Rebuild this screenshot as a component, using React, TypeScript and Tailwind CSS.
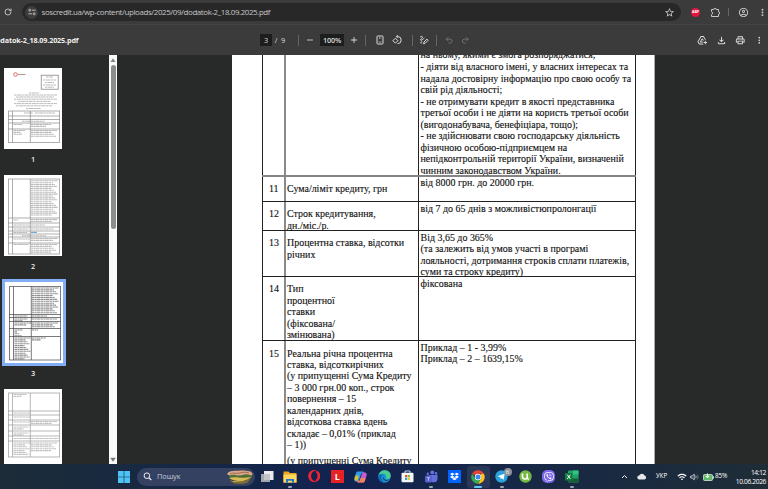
import type { ReactNode } from "react";
import { Redo2, RotateCw, Undo2 } from "lucide-react";
import {
  MdAdd,
  MdAddToDrive,
  MdMoreVert,
  MdOutlineAccountCircle,
  MdOutlineFileDownload,
  MdOutlinePrint,
  MdRemove,
  MdStarBorder,
  MdWifi,
} from "react-icons/md";
import { FaDropbox, FaOpera, FaViber } from "react-icons/fa";

interface SlotProps {
  className?: string;
  children?: ReactNode;
}

const Slot = ({ className = "", children }: SlotProps) => (
  <div className={`flex h-3 shrink-0 items-center justify-center ${className}`}>
    {children}
  </div>
);

const Divider = ({ className = "h-[11px]" }: SlotProps) => (
  <div className={`w-px shrink-0 bg-[#656565] ${className}`} />
);

const AddressBar = () => (
  <div className="flex h-[25px] items-center border-b border-[#434343] text-[#c7c7c7]">
    <Slot className="ml-[3px] w-2.5">
      <RotateCw size={8} strokeWidth={2.8} />
    </Slot>
    <div className="ml-[9px] flex h-[18px] w-[661px] items-center rounded-full bg-[#282828]">
      <div className="ml-[3px] flex size-[13px] items-center justify-center rounded-full bg-[#3d3d3d]">
        <svg width="8" height="8" viewBox="0 0 8 8" fill="none" stroke="currentColor" strokeWidth="0.9">
          <circle cx="1.8" cy="2.2" r="1" />
          <path d="M4 2.2h3.6M0.4 5.8h3.6" />
          <circle cx="6.2" cy="5.8" r="1" />
        </svg>
      </div>
      <span className="ml-[3.5px] text-[7.9px] leading-[12px] tracking-[-0.38px] whitespace-nowrap">
        soscredit.ua/wp-content/uploads/2025/09/dodatok-2_18.09.2025.pdf
      </span>
      <MdStarBorder size={11} className="mr-[6px] ml-auto" />
    </div>
    <Slot className="ml-[10px] w-[9px]">
      <div className="flex size-[9px] items-center justify-center rounded-full bg-[#e4153e] text-[3.5px] font-bold text-white">
        ABP
      </div>
    </Slot>
    <Slot className="ml-[9px] w-3">
      <svg width="11" height="11" viewBox="0 0 11 11" fill="none" stroke="currentColor">
        <path d="M1.500 2.500h2.300a1.200 1.200 0 0 1 2.400 0h2.300v2.300a1.200 1.200 0 0 1 0 2.400v2.300h-7V7.600a1.500 1.500 0 0 0 0-2.900z" />
      </svg>
    </Slot>
    <Divider className="ml-[7px] h-2" />
    <Slot className="ml-[8px] w-3">
      <MdOutlineAccountCircle size={11} />
    </Slot>
    <Slot className="ml-[7px] w-3">
      <MdMoreVert size={11} />
    </Slot>
  </div>
);

const PdfToolbar = () => (
  <div className="flex h-[30px] items-center text-[#dcdcdc]">
    <div className="flex w-[260px] overflow-hidden">
      <span className="-ml-[4px] text-[7.2px] leading-[12px] font-bold tracking-[-0.14px] whitespace-nowrap text-[#efefef]">
        odatok-2_18.09.2025.pdf
      </span>
    </div>
    <Slot className="w-3 bg-[#1d1d1d] text-[7.3px] font-medium">3</Slot>
    <Slot className="ml-[2px] w-1 text-[7.3px]">/</Slot>
    <Slot className="ml-[2px] w-1.5 text-[7.3px] font-medium">9</Slot>
    <Divider className="ml-[12px] h-[11px]" />
    <Slot className="ml-[5px] w-3">
      <MdRemove size={10} />
    </Slot>
    <Slot className="ml-[4px] w-6 bg-[#1d1d1d] text-[7.3px] font-semibold tracking-[-0.2px]">100%</Slot>
    <Slot className="ml-[4px] w-3">
      <MdAdd size={10} />
    </Slot>
    <Divider className="ml-[5px] h-[11px]" />
    <Slot className="ml-[8px] w-3">
      <svg width="8" height="10" viewBox="0 0 8 10" fill="none" stroke="currentColor">
        <rect x="1" y="1" width="6" height="8" rx="0.6" />
        <path d="M2.9 3.6 4 2.5 5.1 3.6M2.9 6.4 4 7.5 5.1 6.4" strokeWidth="0.9" />
      </svg>
    </Slot>
    <Slot className="ml-[5px] w-3">
      <svg width="10" height="10" viewBox="0 0 10 10" fill="none" stroke="currentColor">
        <path d="M3.4 3.2.9 5.7l2.5 2.5 2.5-2.5z" />
        <path d="M4.6 1.5h1a3.6 3.6 0 1 1 0 7.2M5.8.1 4.3 1.5 5.8 3" />
      </svg>
    </Slot>
    <Divider className="ml-[9px] h-[11px]" />
    <Slot className="ml-[5px] w-3">
      <svg width="10" height="10" viewBox="0 0 10 10" fill="none" stroke="currentColor" strokeLinecap="round">
        <path d="M1.3 2C2.2 1 3.9 1.2 3.3 2.7 2.9 3.7 1.2 4.2 1.7 5.2c.6.9 2.3-1.4 3.3-1.9M2.1 8.4c-1.1-.6-.4-1.6.8-1.5" />
        <path d="m4.7 8.5.3-1.5 2.9-2.9 1.2 1.2-2.9 2.9z" />
      </svg>
    </Slot>
    <Divider className="ml-[6px] h-[11px]" />
    <Slot className="ml-[6px] w-3 text-[#747474]">
      <Undo2 size={8.5} strokeWidth={2.6} />
    </Slot>
    <Slot className="ml-[4px] w-3 text-[#747474]">
      <Redo2 size={8.5} strokeWidth={2.6} />
    </Slot>
    <Slot className="ml-auto w-3">
      <MdAddToDrive size={10.5} />
    </Slot>
    <Slot className="ml-[7px] w-3">
      <MdOutlineFileDownload size={11} />
    </Slot>
    <Slot className="ml-[7px] w-3">
      <MdOutlinePrint size={10.5} />
    </Slot>
    <Slot className="mr-[3px] ml-[7px] w-3">
      <MdMoreVert size={10.5} />
    </Slot>
  </div>
);

interface ThumbProps {
  rows: number[];
  text: [number, number, number, number][];
  ink: string;
  children?: ReactNode;
}

// text entries: x, first line y, width, number of lines
const Thumb = ({ rows, text, ink, children }: ThumbProps) => (
  <svg width="58" height="81" viewBox="0 0 58 81" className="block bg-white" fill="none">
    <path
      d={`M4.5 ${rows[0]}V${rows[rows.length - 1]}M8.5 ${rows[0]}V${rows[rows.length - 1]}M26.3 ${rows[0]}V${rows[rows.length - 1]}M55.5 ${rows[0]}V${rows[rows.length - 1]}`}
      stroke={ink}
      strokeWidth="0.7"
    />
    {rows.map((y) => (
      <path key={y} d={`M4.2 ${y}H55.8`} stroke={ink} strokeWidth="0.7" />
    ))}
    {text.map(([x, y, w, n]) =>
      Array.from({ length: n }, (_, i) => (
        <path
          key={`${x}-${y}-${i}`}
          d={`M${x} ${y + i * 1.9}h${w - ((i * 5) % 7)}`}
          stroke={ink}
          strokeOpacity="0.6"
          strokeWidth="1.1"
          strokeDasharray="2.6 0.4 1.7 0.3 3.4 0.4"
        />
      )),
    )}
    {children}
  </svg>
);

const PageNumber = ({ children }: SlotProps) => (
  <div className="h-[11px] w-[58px] text-center text-[7.3px] leading-[11px] font-semibold text-[#ececec]">
    {children}
  </div>
);

const Thumbnails = () => (
  <div className="w-[109px] overflow-hidden pl-1">
    <div className="mt-[13px]">
      <Thumb
        ink="#8b8b8b"
        rows={[43, 48, 51.5, 55, 61, 74.5]}
        text={[
          [20, 45, 9, 1],
          [31, 45, 20, 1],
          [18, 53.2, 23, 1],
          [9.5, 56.5, 9, 1],
          [27, 56.5, 20, 2],
          [9.5, 62.5, 12, 3],
          [27, 62.5, 26, 4],
        ]}
      >
        <circle cx="11.5" cy="6.5" r="1.8" stroke="#d95b5b" strokeWidth="0.9" />
        <path d="M13.5 6.5h8" stroke="#b49b9b" strokeWidth="1.2" />
        <rect x="37.2" y="7.2" width="17" height="14" stroke="#777" strokeWidth="0.7" />
        <path
          d="M42 9h7M39 12h13M41 14.5h9M39 17h13M41 19.2h9M25 25h10M10 27h43M12 29h38M10 31.2h43M14 33.4h33M10 35.6h43M12 37.8h36M22 40.5h15"
          stroke="#aaa"
          strokeWidth="0.8"
          strokeDasharray="2.5 0.5 4 0.4"
        />
      </Thumb>
    </div>
    <div className="mt-[5px] mb-[10px]">
      <PageNumber>1</PageNumber>
    </div>
    <Thumb
      ink="#8d8d8d"
      rows={[4, 43, 48, 52, 56, 59, 62, 68, 79]}
      text={[
        [27, 5.8, 27, 19],
        [9.5, 45, 5, 1],
        [27, 44.6, 26, 2],
        [9.5, 50, 16, 1],
        [27, 50, 14, 1],
        [9.5, 54, 15, 1],
        [27, 54, 23, 1],
        [9.5, 57.5, 14, 1],
        [18, 60.7, 24, 1],
        [9.5, 64, 16, 1],
        [27, 63.5, 27, 2],
        [9.5, 69.5, 15, 1],
        [27, 69.5, 26, 5],
      ]}
    >
      <path d="M27 57.3h6" stroke="#4d9bd5" />
    </Thumb>
    <div className="mt-[5px] mb-[7px]">
      <PageNumber>2</PageNumber>
    </div>
    <div className="-ml-[2px] h-[87px] w-16 border-[3px] border-[#83adf4] bg-white">
      <Thumb
        ink="#424242"
        rows={[4.5, 32.5, 35.5, 39.5, 46.5, 54.5, 78]}
        text={[
          [27, 6, 27, 14],
          [9.5, 34, 13, 1],
          [27, 34, 15, 1],
          [9.5, 37, 13, 2],
          [27, 37, 25, 1],
          [9.5, 41, 17, 2],
          [27, 41, 26, 3],
          [9.5, 48, 8, 4],
          [27, 48, 6, 1],
          [9.5, 56, 16, 12],
          [27, 56, 14, 2],
        ]}
      />
    </div>
    <div className="mt-[2px] mb-[10px]">
      <PageNumber>3</PageNumber>
    </div>
    <Thumb
      ink="#999"
      rows={[4, 22, 26, 31, 36, 42, 47, 52, 68]}
      text={[
        [9.5, 5.5, 13, 2],
        [9.5, 24, 17, 1],
        [9.5, 28, 17, 1],
        [9.5, 33, 17, 1],
        [27, 32.5, 26, 2],
        [9.5, 38, 15, 2],
        [9.5, 44, 15, 2],
        [9.5, 49.5, 45, 1],
        [9.5, 54, 17, 7],
        [27, 54, 26, 5],
      ]}
    />
  </div>
);

const Scrollbar = () => (
  <div className="flex w-2 flex-col items-center bg-[#fafafa]">
    <svg width="8" height="10" viewBox="0 0 8 10" fill="#858585">
      <path d="M4 3.2 6.6 7H1.4z" />
    </svg>
    <div className="h-[164px] w-[5px] rounded-full bg-[#8c8c8c]" />
    <svg width="8" height="9" viewBox="0 0 8 9" fill="#777" className="mt-auto">
      <path d="M1.2 2.8h5.6L4 6.8z" />
    </svg>
  </div>
);

interface RowProps {
  frame: string;
  no?: string;
  name?: ReactNode;
  nameTop?: string;
  value: ReactNode;
  valueTop: string;
}

const Row = ({ frame, no, name, nameTop = "", value, valueTop }: RowProps) => (
  <div className={`flex w-[374px] ${frame}`}>
    <div className="w-[22px] border-l border-[#222] pl-[6px]">
      <div className={nameTop}>{no}</div>
    </div>
    <div className="w-[134px] border-l-2 border-[#8a8a8a] pl-[1px]">
      <div className={nameTop}>{name}</div>
    </div>
    <div className="w-[218px] border-x border-[#222] pl-[1.5px]">
      <div className={valueTop}>{value}</div>
    </div>
  </div>
);

const DocumentPage = () => (
  <div className="ml-[115px] w-[423px] overflow-hidden border-r border-[#aaa] bg-white pl-[30px] font-['Liberation_Serif',serif] text-[9.96px] leading-[11.56px] whitespace-pre text-[#111] [-webkit-text-stroke:0.12px]">
    <Row
      frame="h-[122px] border-b-2 border-[#858585]"
      valueTop="-mt-[5.6px]"
      value={`на ньому, якими є змога розпоряджатися;
- діяти від власного імені, у власних інтересах та
надала достовірну інформацію про свою особу та
свій рід діяльності;
- не отримувати кредит в якості представника
третьої особи і не діяти на користь третьої особи
(вигодонабувача, бенефіціара, тощо);
- не здійснювати свою господарську діяльність
фізичною особою-підприємцем на
непідконтрольній території України, визначеній
чинним законодавством України.`}
    />
    <Row
      frame="h-[25px] border-b border-[#222]"
      no="11"
      name="Сума/ліміт кредиту, грн"
      nameTop="mt-[6px]"
      value="від 8000 грн. до 20000 грн."
      valueTop="mt-0"
    />
    <Row
      frame="h-[29px] border-b border-[#222]"
      no="12"
      name={"Строк кредитування,\nдн./міс./р."}
      nameTop="mt-[6px]"
      value="від 7 до 65 днів з можливістюпролонгації"
      valueTop="mt-[1px]"
    />
    <Row
      frame="h-[46px] border-b border-[#222]"
      no="13"
      name={"Процентна ставка, відсотки\nрічних"}
      nameTop="mt-[6px]"
      value={`Від 3,65 до 365%
(та залежить від умов участі в програмі
лояльності, дотримання строків сплати платежів,
суми та строку кредиту)`}
      valueTop="mt-[0.6px]"
    />
    <Row
      frame="h-[64px] border-b border-[#222]"
      no="14"
      name={"Тип\nпроцентної\nставки\n(фіксована/\nзмінювана)"}
      nameTop="mt-[6px]"
      value="фіксована"
      valueTop="mt-[1px]"
    />
    <Row
      frame="h-[140px]"
      no="15"
      name={
        <>
          <div className="leading-[11.45px]">
            {`Реальна річна процентна
ставка, відсоткирічних
(у припущенні Сума Кредиту
– 3 000 грн.00 коп., строк
повернення – 15
календарних днів,
відсоткова ставка вдень
складає – 0,01% (приклад
– 1))`}
          </div>
          <div className="mt-[4.5px]">(у припущенні Сума Кредиту</div>
        </>
      }
      nameTop="mt-[6.5px]"
      value={"Приклад – 1 - 3,99%\nПриклад – 2 – 1639,15%"}
      valueTop="mt-[0.6px]"
    />
  </div>
);

interface AppIconProps {
  running?: boolean;
  active?: boolean;
  children: ReactNode;
}

const AppIcon = ({ running, active, children }: AppIconProps) => (
  <div
    className={`relative flex h-[22px] w-[23.5px] shrink-0 items-center justify-center rounded-[3px] ${active ? "bg-[#2a3858]" : ""}`}
  >
    {children}
    {running && (
      <span
        className={`absolute bottom-0 h-[1.5px] rounded-full ${active ? "w-2 bg-[#5ac8f5]" : "w-[4px] bg-[#9aa3b5]"}`}
      />
    )}
  </div>
);

const Taskbar = () => (
  <div className="flex h-[25px] items-center bg-linear-to-r from-[#1c2c38] via-[#122250] via-45% to-[#1f2d37] text-white">
    <svg width="12" height="12" viewBox="0 0 12 12" className="ml-[118px]">
      <path d="M0 0h5.7v5.7H0zM6.3 0H12v5.7H6.3zM0 6.3h5.7V12H0zM6.3 6.3H12V12H6.3z" fill="#4cc4f5" />
    </svg>
    <div className="ml-[7px] flex h-[18px] w-[118px] items-center rounded-full bg-[#344160]">
      <svg width="9" height="9" viewBox="0 0 9 9" fill="none" stroke="#eef1f6" className="ml-[6px]">
        <circle cx="3.9" cy="3.7" r="2.8" />
        <path d="m6 5.8 2.3 2.3" strokeWidth="1.3" />
      </svg>
      <span className="ml-[5px] text-[7.4px] leading-none tracking-[-0.1px] text-[#c5ccda]">Пошук</span>
      <svg width="28" height="16" viewBox="0 0 28 16" className="mr-[1px] ml-auto">
        <path d="M1 5C3 1 10 2 14 1.5S27 2 26.5 5s-4 2-6 2-3 1-6 0-9 2-13.5-2z" fill="#dba98a" />
        <path d="M3 7c6-3 8 1 13-1s8 0 11 1l-3 3H4z" fill="#4f6e34" />
        <path d="M3 9c7-2 11 1 22-1l-3 3c-5 1-13 2-19-2z" fill="#d8bb52" />
        <path d="M4 11c7 2 13 2 20-2 0 5-5 6-10 6s-9-1-10-4z" fill="#7b6a36" />
        <path d="M4 5c3-2 7 0 10-1s6-1 9 0" fill="none" stroke="#8d5b42" strokeWidth=".8" />
        <path d="m7 12.5 11-1" fill="none" stroke="#d8bb52" strokeWidth="1" />
      </svg>
    </div>
    <div className="flex items-center">
      <AppIcon>
        <svg width="14" height="14" viewBox="0 0 14 14">
          <rect x="1" y="4" width="9" height="8" fill="#a3a8ae" />
          <rect x="4" y="1" width="9.5" height="9" fill="#ececec" />
          <rect x="4" y="4" width="6" height="6" fill="#c3c5c8" />
        </svg>
      </AppIcon>
      <AppIcon running>
        <svg width="14" height="12" viewBox="0 0 14 12">
          <path d="M.5.5h5L7 2h6.5v9.5H.5z" fill="#e9a526" />
          <path d="M.5 3.5h13v8H.5z" fill="#ffd75e" />
          <path d="M3 8h8v3.5H3z" fill="#1976d2" />
          <path d="M5 9.7h4v1.8H5z" fill="#ffd75e" />
        </svg>
      </AppIcon>
      <AppIcon>
        <FaOpera size={12.5} color="#f02434" />
      </AppIcon>
      <AppIcon>
        <div className="flex size-[13px] items-center justify-center bg-[#e62225] text-[9px] leading-none font-bold">
          L
        </div>
      </AppIcon>
      <AppIcon>
        <svg width="13" height="12" viewBox="0 0 13 12">
          <path d="M4 .6h4.5c1 0 1.2.7 1.5 1.7H7.3L5.1 9.2c-.3.8-.7 1.2-1.6 1.2H2C.5 10.4 0 9 .4 7.5L2 2.2C2.4 1 3 .6 4 .6z" fill="#2a9bea" />
          <path d="M.6 7 1.3 4.5h3.5L3.6 9.8H2C.8 9.8.2 8.5.6 7z" fill="#cdc338" />
          <path d="M9 11.4H4.5c-1 0-1.2-.7-1.5-1.7h2.7l2.2-6.9c.3-.8.7-1.2 1.6-1.2H11c1.5 0 2 1.4 1.6 2.9L11 9.8c-.4 1.2-1 1.6-2 1.6z" fill="#c65ad0" />
          <path d="M4 11.4c-.6-.2-.8-.9-1-1.7h2.7l.9-2.8h4.9l-.8 3c-.3 1.1-.8 1.5-1.7 1.5z" fill="#f28254" />
        </svg>
      </AppIcon>
      <AppIcon>
        <svg width="13" height="13" viewBox="0 0 13 13">
          <circle cx="6.5" cy="6.5" r="6.2" fill="#1594d4" />
          <path d="M.5 6C1 2 4 .2 7 .3c4 .2 6 3 5.7 5.7C12.5 8 11 8.9 9.4 8.9S7.6 8 8 7.3c.8-2-1.2-3.5-3.2-3.5S1.3 4.6.5 6z" fill="#47ce8d" />
          <path d="M5 4c-3 2-2 7.5 2.5 8.6C3 13.3-.5 9.8.4 6 1.1 4.6 3.3 3.6 5 4z" fill="#1366b8" />
          <path d="M5.6 5.6c-1.5 2.5.9 5.4 4.6 4.2l1.6-.7c-2 2.4-5.5 2-6.6-.2-.6-1.2-.4-2.5.4-3.3z" fill="#11244e" />
        </svg>
      </AppIcon>
      <AppIcon>
        <svg width="13" height="13" viewBox="0 0 13 13">
          <path d="M4 3V1h5v2" fill="none" stroke="#bcd9ef" />
          <rect x=".5" y="2.8" width="12" height="9.5" rx="1" fill="#f3f6f8" />
          <path d="M4 5h2.2v2.2H4z" fill="#f05023" />
          <path d="M6.7 5h2.2v2.2H6.7z" fill="#7db928" />
          <path d="M4 7.7h2.2v2.2H4z" fill="#1aa3e8" />
          <path d="M6.7 7.7h2.2v2.2H6.7z" fill="#fdb813" />
        </svg>
      </AppIcon>
      <AppIcon running>
        <svg width="13" height="13" viewBox="0 0 13 13" fill="#646fe0">
          <circle cx="7.3" cy="2.4" r="2" />
          <circle cx="11" cy="3.4" r="1.3" />
          <path d="M4 5h8.5v4c0 4-6 4.5-7.5 1z" />
          <rect y="5.5" width="7" height="7" rx="1.5" fill="#5961cf" />
          <circle cx="2.8" cy="3.8" r="1.2" />
          <path d="M2.2 7.5h2.6M3.5 7.5v3.2" stroke="#d7daf7" strokeWidth=".7" />
        </svg>
      </AppIcon>
      <AppIcon>
        <div className="flex size-[13px] items-center justify-center bg-[#0062ff]">
          <FaDropbox size={9} />
        </div>
      </AppIcon>
      <AppIcon running active>
        <svg width="14" height="14" viewBox="0 0 14 14">
          <path d="M7 7 1.2 3.6A6.7 6.7 0 0 1 12.9 3.8H7z" fill="#ea4335" />
          <path d="M12.9 3.8A6.7 6.7 0 0 1 7 13.7L9.8 8.5 10 3.8z" fill="#fbc116" />
          <path d="M1.2 3.6A6.7 6.7 0 0 0 7 13.7L9.8 8.6H4.2z" fill="#34a853" />
          <circle cx="7" cy="7" r="3.2" fill="#fff" />
          <circle cx="7" cy="7" r="2.5" fill="#4285f4" />
        </svg>
      </AppIcon>
      <AppIcon running>
        <svg width="13" height="13" viewBox="0 0 13 13">
          <circle cx="6.5" cy="6.5" r="6.2" fill="#2aa3dc" />
          <path d="m2.5 6.3 7.3-2.8-1.2 6.2-2-1.5-1 1-.3-2z" fill="#fff" />
        </svg>
        <span className="absolute top-[2px] right-[2px] flex size-[8px] items-center justify-center rounded-full bg-[#8c9299] text-[6px] leading-none">
          6
        </span>
      </AppIcon>
      <AppIcon>
        <svg width="13" height="13" viewBox="0 0 13 13">
          <circle cx="6.5" cy="6.5" r="6.2" fill="#75b943" />
          <path d="M3.5 3.5v3.2c0 3 4.7 3 4.7.3V3.5M8 7c0 1.8.8 2.2 2 2" fill="none" stroke="#fff" strokeWidth="1.6" />
        </svg>
      </AppIcon>
      <AppIcon>
        <div className="flex size-[13px] items-center justify-center rounded-[5px] bg-[#7c68e8]">
          <FaViber size={10} />
        </div>
      </AppIcon>
      <AppIcon running>
        <svg width="14" height="13" viewBox="0 0 14 13">
          <rect x="3" y=".5" width="10.5" height="12" rx=".8" fill="#21a366" />
          <path d="M8 .5h5.5v4H8z" fill="#33c481" />
          <path d="M3 8.5h10.5v4H3z" fill="#185c37" />
          <rect y="3" width="7.5" height="7.5" rx=".6" fill="#107c41" />
          <path d="m2.3 4.8 3 4M5.3 4.8l-3 4" stroke="#fff" />
        </svg>
      </AppIcon>
    </div>
    <div className="ml-auto flex items-center text-[6.6px] leading-none">
      <svg width="7" height="5" viewBox="0 0 7 5" fill="none" stroke="#eee">
        <path d="m1 4 2.5-2.5L6 4" />
      </svg>
      <svg width="10" height="7" viewBox="0 0 10 7" fill="#e4e8eb" className="ml-[9px]">
        <path d="M2.4 6.5a2 2 0 0 1-.2-4A2.9 2.9 0 0 1 7.6 2.6a2 2 0 0 1 0 3.9z" />
      </svg>
      <span className="ml-[9px] w-[12px] text-[6.2px]">УКР</span>
      <MdWifi size={10} className="ml-[9px]" />
      <svg width="9" height="8" viewBox="0 0 9 8" fill="none" stroke="#e6e9ec" strokeWidth=".8" className="ml-[3px]">
        <path d="M.7 3v2h1.5l2 1.8V1.2L2.2 3zM5.6 2.7c.7.8.7 1.8 0 2.6" />
        <path d="M7 1.5c1.5 1.6 1.5 3.4 0 5" stroke="#75808b" />
      </svg>
      <svg width="11" height="8" viewBox="0 0 11 8" className="ml-[4px]">
        <rect x=".5" y="1.5" width="9" height="6" rx="1" fill="#62b868" stroke="#d6ebd8" strokeWidth=".8" />
        <path d="M10.4 3.3v2.4" stroke="#d6ebd8" />
        <path d="M4.5.2v3M2.8 3.2h3.4L4.5 5z" fill="#fff" stroke="#fff" strokeWidth=".7" />
      </svg>
      <span className="ml-[1px] w-[12px] text-[6.4px] tracking-[-0.1px]">85%</span>
      <div className="mr-[2px] ml-[4px] w-[35px] text-right leading-[9px] tracking-[-0.35px]">
        <div>14:12</div>
        <div>10.06.2026</div>
      </div>
    </div>
  </div>
);

const App = () => (
  <div className="flex h-[489px] w-[768px] flex-col overflow-hidden bg-[#3b3b3b] font-['Open_Sans','Noto_Sans',sans-serif]">
    <AddressBar />
    <PdfToolbar />
    <div className="flex h-[409px] overflow-hidden bg-[#282929]">
      <Thumbnails />
      <Scrollbar />
      <DocumentPage />
    </div>
    <Taskbar />
  </div>
);

export default App;
